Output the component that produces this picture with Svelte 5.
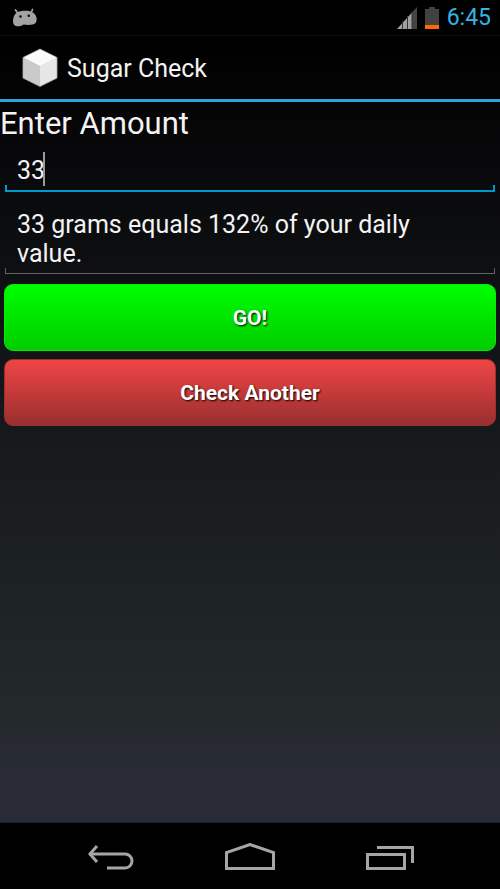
<script>
  let amount = $state('33');
  let checked = $state(33);
  const DAILY_GRAMS = 25;

  let result = $derived(
    checked === null
      ? ''
      : `${checked} grams equals ${Math.round((checked / DAILY_GRAMS) * 100)}% of your daily value.`
  );

  function check(event) {
    event.preventDefault();
    checked = Number(amount) || 0;
  }

  function reset() {
    amount = '';
    checked = null;
  }
</script>

<svelte:head><title>Sugar Check</title></svelte:head>

<div class="screen">
  <div class="status">
    <svg class="droid" width="26" height="20" viewBox="0 0 26 20" aria-hidden="true">
      <path d="M3.500 2L6 5.500M20.500 1.500L19 5" stroke="#a3a3a3" stroke-width="1.800" stroke-linecap="round" />
      <path d="M5 4.500C8 2.500 17 2.300 20 4C24.500 6 26 12 23.500 15C21 17.500 15 17 11.500 16.500C10 18.500 3 19.500 1.500 16C.5 13 1 7 5 4.500Z" fill="#a3a3a3" />
      <circle cx="8.500" cy="8.500" r="1.200" fill="#000" />
      <circle cx="16.800" cy="7.800" r="1.200" fill="#000" />
    </svg>
    <div class="indicators">
      <svg width="20" height="22" viewBox="0 0 20 22" aria-hidden="true">
        <path d="M0 22L15 5.500V22Z" fill="#a0a0a0" />
        <path d="M15 22V5.500L20 0V22Z" fill="#444" />
        <path d="M5.500 14V22M10.500 9V22M15 4V22" stroke="#333" stroke-width="1" />
      </svg>
      <svg width="14" height="22" viewBox="0 0 14 22" aria-hidden="true">
        <path d="M4 0H10V2H14V22H0V2H4Z" fill="#424242" />
        <path d="M0 18H14V22H0Z" fill="#ff6a00" />
      </svg>
      <time>6:45</time>
    </div>
  </div>

  <main>
    <header>
      <svg width="36" height="40" viewBox="0 0 36 40" aria-hidden="true">
        <path d="M18 1L35 9.500V30L18 38.500L1 30V9.500Z" fill="#e3e3e3" stroke="#8a8a8a" />
        <path d="M18 1.500L34.500 9.500L18 18L1.500 9.500Z" fill="#fafafa" />
        <path d="M1.500 9.500L18 18V38L1.500 30Z" fill="#cacaca" />
        <path d="M34.500 9.500L18 18V38L34.500 30Z" fill="#e6e6e6" />
      </svg>
      <h1>Sugar Check</h1>
    </header>

    <form onsubmit={check}>
      <label for="amount">Enter Amount</label>
      <div class="field active">
        <input id="amount" type="text" inputmode="decimal" autocomplete="off" bind:value={amount} />
        <span class="caret" style="left: calc(10px + {amount.length}ch)"></span>
      </div>
      <div class="field result">
        <textarea rows="2" readonly aria-label="Result" value={result}></textarea>
      </div>
      <button class="go" type="submit">GO!</button>
      <button class="again" type="button" onclick={reset}>Check Another</button>
    </form>
  </main>

  <nav>
    <button type="button" aria-label="Back">
      <svg width="50" height="30" viewBox="0 0 50 30">
        <path d="M5 11H41A7 7 0 0 1 41 25H23" />
        <path d="M13 3L6 11L13 19" />
      </svg>
    </button>
    <button type="button" aria-label="Home">
      <svg width="52" height="30" viewBox="0 0 52 30">
        <path d="M2.500 25.500V9.500L26 1.500L49.500 9.500V25.500Z" />
      </svg>
    </button>
    <button type="button" aria-label="Recent apps">
      <svg width="50" height="30" viewBox="0 0 50 30">
        <path d="M1.500 11.500H38.500V25.500H1.500Z" />
        <path d="M11 4.500H46.500V20" />
      </svg>
    </button>
  </nav>
</div>

<style>
  :global(body) {
    margin: 0;
    background: #000;
  }

  .screen {
    display: flex;
    flex-direction: column;
    min-height: 100vh;
    background: #000;
    color: #f3f3f3;
    font-family: Roboto, "Noto Sans", sans-serif;
  }

  .status {
    display: flex;
    align-items: center;
    justify-content: space-between;
    box-sizing: border-box;
    height: 35px;
    padding: 0 9px 0 12px;
  }

  .droid {
    fill: none;
  }

  .indicators {
    display: flex;
    align-items: center;
    gap: 8px;
  }

  time {
    padding-top: 1px;
    color: #33b5e5;
    font-size: 23px;
    line-height: 34px;
  }

  main {
    flex: 1;
    background: linear-gradient(#000, #101114 33%, #15191b 50%, #23282a 85%, #292c36 95%);
  }

  header {
    display: flex;
    align-items: center;
    gap: 9px;
    box-sizing: border-box;
    height: 67px;
    padding: 0 22px;
    border-top: 1px solid #0c0c0c;
    border-bottom: 3px solid #2ba6d8;
  }

  h1 {
    margin: 0;
    padding-top: 3px;
    font-size: 25px;
    font-weight: 400;
    line-height: 32px;
  }

  form {
    display: flex;
    flex-direction: column;
  }

  label {
    font-size: 31px;
    line-height: 44px;
  }

  .field {
    position: relative;
    margin: 0 5px;
    font-size: 25px;
    line-height: 29px;
  }

  .field::after {
    content: "";
    position: absolute;
    inset: auto 0 0;
    height: 6px;
    box-sizing: border-box;
    border: 1px solid #636363;
    border-top: 0;
    pointer-events: none;
  }

  .active::after {
    height: 7px;
    border: 2px solid #0099cc;
    border-top: 0;
  }

  input,
  textarea {
    display: block;
    box-sizing: border-box;
    width: 100%;
    margin: 0;
    border: 0;
    outline: 0;
    background: transparent;
    color: inherit;
    font: inherit;
    resize: none;
    overflow: hidden;
  }

  input {
    height: 46px;
    padding: 2px 12px 0;
    caret-color: transparent;
  }

  textarea {
    height: 82px;
    padding: 18px 32px 6px 12px;
  }

  .caret {
    position: absolute;
    top: 6px;
    width: 2px;
    height: 34px;
    background: #9a9a9a;
  }

  .go,
  .again {
    height: 67px;
    margin: 8px 4px 0;
    border: 1px solid;
    border-radius: 9px;
    color: #fff;
    font: 700 21px/24px Roboto, "Noto Sans", sans-serif;
    text-shadow: 1px 1px 2px #000;
    cursor: pointer;
  }

  .go {
    margin-top: 10px;
    border-color: #00f000;
    background: linear-gradient(#00ff00, #00cc00);
  }

  .again {
    border-color: #992f2f;
    background: linear-gradient(#f04545, #992f2f);
  }

  nav {
    display: flex;
    align-items: center;
    justify-content: space-between;
    box-sizing: border-box;
    height: 67px;
    padding: 4px 84px 0;
    border-top: 1px solid #1d2023;
  }

  nav button {
    display: flex;
    padding: 0;
    border: 0;
    background: none;
    cursor: pointer;
  }

  nav svg {
    fill: none;
    stroke: #a5a5a5;
    stroke-width: 3;
  }
</style>
